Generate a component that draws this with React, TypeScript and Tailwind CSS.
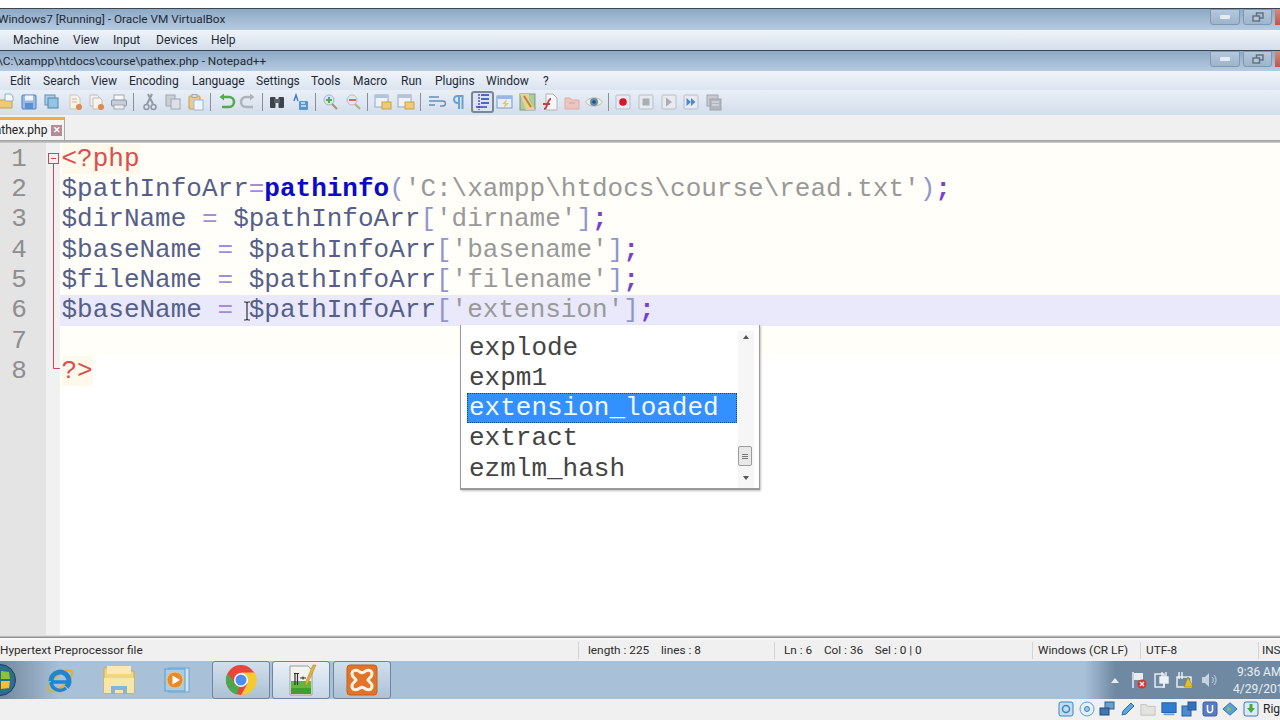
import type { ReactNode } from 'react';

const ui = "font-['Roboto','Noto_Sans',sans-serif]";

function Tool({ className = 'w-[22px]', children }: { className?: string; children: ReactNode }) {
  return (
    <div className={`flex h-[22px] shrink-0 items-center justify-center opacity-90 ${className}`}>
      <svg width="20" height="20" viewBox="0 0 20 20" fill="none">
        {children}
      </svg>
    </div>
  );
}

function Sep({ className }: { className: string }) {
  return <div className={`h-[18px] w-px shrink-0 bg-[#8a9098] ${className}`} />;
}

function WinButtons() {
  return (
    <div className="ml-auto flex h-[16px] gap-[3px] self-start pt-0">
      <div className="flex h-[16px] w-[30px] items-center justify-center rounded-b-[3px] border border-[#7f97b0] bg-gradient-to-b from-[#b4c8dc] to-[#9db4cc]">
        <div className="h-[4px] w-[10px] rounded-[1px] bg-[#e6ebf0]" />
      </div>
      <div className="flex h-[16px] w-[29px] items-center justify-center rounded-b-[3px] border border-[#7f97b0] bg-gradient-to-b from-[#b4c8dc] to-[#9db4cc]">
        <svg width="12" height="10" viewBox="0 0 12 10" fill="none" stroke="#5f6e7e" strokeWidth="1.4">
          <rect x="4.5" y="1" width="6.5" height="5" />
          <rect x="1" y="4" width="6.5" height="5" fill="#b4c6d9" />
        </svg>
      </div>
      <div className="h-[16px] w-[5px] bg-gradient-to-b from-[#d9897c] to-[#b9584c]" />
    </div>
  );
}

function TitleBar({ text, h }: { text: string; h: string }) {
  return (
    <div className={`flex shrink-0 overflow-hidden border-t border-[#3a4654] bg-gradient-to-b from-[#8ea9c5] to-[#b6cbe0] ${h}`}>
      <span className="ml-[-2px] mt-[1px] text-[11.8px] leading-[18px] text-[#1e2a36]">{text}</span>
      <WinButtons />
    </div>
  );
}

const vbMenu = [
  ['Machine', 'w-[60px]'],
  ['View', 'w-[40px]'],
  ['Input', 'w-[43px]'],
  ['Devices', 'w-[55px]'],
  ['Help', 'w-[40px]'],
];

const nppMenu = [
  ['Edit', 'w-[33px]'],
  ['Search', 'w-[48px]'],
  ['View', 'w-[38px]'],
  ['Encoding', 'w-[63px]'],
  ['Language', 'w-[64px]'],
  ['Settings', 'w-[55px]'],
  ['Tools', 'w-[42px]'],
  ['Macro', 'w-[48px]'],
  ['Run', 'w-[34px]'],
  ['Plugins', 'w-[51px]'],
  ['Window', 'w-[57px]'],
  ['?', 'w-[20px]'],
];

function Toolbar() {
  return (
    <div className="flex h-[25px] shrink-0 items-center bg-gradient-to-b from-[#e9eff7] to-[#d3deec] pb-[1px] pl-0">
      <Tool className="ml-[-5px] w-[22px]">
        <path d="M1 8h7l2-2h6v10H1z" fill="#f2c766" stroke="#c79a3a" />
        <path d="M9 2h6l2 3v4H9z" fill="#f7fafd" stroke="#8fa6c4" />
      </Tool>
      <Tool className="w-[23px]">
        <rect x="3" y="3" width="14" height="14" rx="1" fill="#8fb5e6" stroke="#3f74bc" />
        <rect x="6" y="3.5" width="8" height="5" fill="#f4f8fd" />
        <rect x="6" y="11" width="8" height="6" fill="#4f86cc" />
      </Tool>
      <Tool className="w-[23px]">
        <rect x="3" y="3" width="10" height="10" fill="#a9cbe6" stroke="#4e87b8" />
        <rect x="6" y="6" width="10" height="10" fill="#8fc0e0" stroke="#3e7ea8" />
      </Tool>
      <Tool className="w-[23px]">
        <path d="M5 3h7l3 3v11H5z" fill="#fbf3e6" stroke="#cfc4ae" />
        <path d="M7 7h5M7 10h5" stroke="#c9b79a" />
        <circle cx="14" cy="15" r="3" fill="#e0813c" />
      </Tool>
      <Tool>
        <path d="M3 3h7l2 2v9H3z" fill="#f3f3f3" stroke="#bcbcbc" />
        <path d="M6 6h7l2 2v9H6z" fill="#faf6ee" stroke="#c2b8a8" />
        <circle cx="14" cy="15" r="3" fill="#e0813c" />
      </Tool>
      <Tool>
        <rect x="5" y="3" width="10" height="6" fill="#fafafa" stroke="#9aa4b0" />
        <rect x="2.5" y="8" width="15" height="6" rx="1" fill="#c5ccd6" stroke="#818c9a" />
        <rect x="5" y="13" width="10" height="4" fill="#f2f2f2" stroke="#9aa4b0" />
      </Tool>
      <Sep className="ml-[3px] mr-[5px]" />
      <Tool>
        <path d="M12 2L7 12M8 2l5 10" stroke="#8a929c" strokeWidth="2" />
        <circle cx="6.5" cy="15" r="2.5" stroke="#8a929c" strokeWidth="1.5" />
        <circle cx="13.5" cy="15" r="2.5" stroke="#8a929c" strokeWidth="1.5" />
      </Tool>
      <Tool className="w-[23px]">
        <rect x="3" y="3" width="9" height="11" fill="#c8ccd2" stroke="#9aa0a8" />
        <rect x="8" y="7" width="9" height="10" fill="#dde1e6" stroke="#9aa0a8" />
      </Tool>
      <Tool className="w-[23px]">
        <rect x="3" y="4" width="11" height="13" rx="1" fill="#ecc98a" stroke="#c09545" />
        <rect x="6" y="2.5" width="5" height="3" fill="#d7dde4" stroke="#9aa0a8" />
        <rect x="8" y="8" width="9" height="10" fill="#f4f8fc" stroke="#9bb3d0" />
      </Tool>
      <Sep className="ml-[2.5px] mr-[4px]" />
      <Tool>
        <path d="M6 5h7a4.5 4.5 0 010 10H6" stroke="#45a33c" strokeWidth="2.5" />
        <path d="M8 1.5L3.5 5 8 8.500z" fill="#45a33c" />
      </Tool>
      <Tool className="w-[23px]">
        <path d="M14 5H8a4.500 4.500 0 000 10h7" stroke="#a8aeb5" strokeWidth="2.500" />
        <path d="M12 1.500L16.500 5 12 8.500z" fill="#a8aeb5" />
      </Tool>
      <Sep className="ml-[2.5px] mr-[2.5px]" />
      <Tool className="w-[23px]">
        <rect x="3" y="5" width="5.500" height="11" rx="1" fill="#2c3238" />
        <rect x="11.500" y="5" width="5.500" height="11" rx="1" fill="#2c3238" />
        <rect x="7" y="7" width="6" height="4" fill="#4c545c" />
      </Tool>
      <Tool className="w-[23px]">
        <rect x="3" y="2" width="6" height="7" fill="#e9f1fa" />
        <path d="M4 9l2-6 2 6" stroke="#2e6fc0" strokeWidth="1.500" />
        <rect x="9" y="9" width="9" height="9" rx="1" fill="#4d8dc9" />
        <path d="M11 11h4M11 14h5" stroke="#d6e8f7" strokeWidth="1.500" />
      </Tool>
      <Sep className="ml-[3.5px] mr-[2.5px]" />
      <Tool className="w-[23px]">
        <circle cx="9" cy="8" r="5" fill="#d6e6ee" stroke="#9ab3c2" />
        <path d="M12 12l5 5" stroke="#a08c60" strokeWidth="2" />
        <path d="M9 5v6M6 8h6" stroke="#46a245" strokeWidth="2" />
      </Tool>
      <Tool className="w-[23px]">
        <circle cx="9" cy="8" r="5" fill="#e2e8ee" stroke="#b0bcc6" />
        <path d="M12 12l5 5" stroke="#b8a47c" strokeWidth="2" />
        <path d="M6 8h7" stroke="#d85a5a" strokeWidth="2" />
      </Tool>
      <Sep className="ml-[2.5px] mr-[3.5px]" />
      <Tool className="w-[23px]">
        <rect x="2" y="3" width="13" height="12" fill="#f1f4f8" stroke="#8da2bb" />
        <rect x="2" y="3" width="13" height="3" fill="#aac1dc" />
        <rect x="9" y="10" width="9" height="7" fill="#f2c766" stroke="#c79a3a" />
      </Tool>
      <Tool className="w-[23px]">
        <rect x="2" y="3" width="13" height="12" fill="#f1f4f8" stroke="#8da2bb" />
        <rect x="2" y="3" width="13" height="3" fill="#aac1dc" />
        <rect x="9" y="10" width="9" height="7" fill="#f2c766" stroke="#c79a3a" />
      </Tool>
      <Sep className="ml-[2.5px] mr-[4px]" />
      <Tool>
        <path d="M3 5h10M3 9h14a2.500 2.500 0 010 5h-3M3 13h6" stroke="#5b84b5" strokeWidth="1.500" />
      </Tool>
      <Tool>
        <path d="M11 4v13M14.500 4v13M15.500 4H9.500a3.500 3.500 0 000 7h2" stroke="#5a9bd0" strokeWidth="2" />
      </Tool>
      <div className="ml-[1.5px] flex h-[22px] w-[23px] shrink-0 items-center justify-center rounded-[3px] border-2 border-[#7b8696] bg-[#dbe4f0]">
        <svg width="16" height="18" viewBox="0 0 16 18" fill="none" strokeWidth="1.500">
          <path d="M5 1v16" stroke="#5550b8" strokeDasharray="2 1" />
          <path d="M7 2h8M7 6h8M7 10h8" stroke="#1e3fb0" />
          <path d="M2 14h11" stroke="#3a44b0" />
        </svg>
      </div>
      <Tool>
        <rect x="2" y="4" width="15" height="12" fill="#e8f0f8" stroke="#6b94c4" />
        <rect x="2" y="4" width="15" height="3" fill="#8fb5de" />
        <path d="M12 7l-5 5h3l-2 5 6-6h-3z" fill="#eec04e" />
      </Tool>
      <Tool className="w-[23px]">
        <rect x="3" y="2" width="15" height="16" fill="#a7cc88" stroke="#7e8a90" />
        <path d="M3 2h9v6l6 10H9z" fill="#e8d090" />
        <path d="M7 4l7 11" stroke="#c56f2e" strokeWidth="2" />
      </Tool>
      <Tool>
        <path d="M6 2h7l4 4v12H6z" fill="#f8f8f8" stroke="#b0b0b0" />
        <path d="M4 17c4 0 3-10 7-10M3 12h7" stroke="#c92b2b" strokeWidth="1.800" />
      </Tool>
      <Tool>
        <path d="M3 6h5l1.500 2H17v9H3z" fill="#eec2bc" stroke="#dfa79f" />
        <path d="M7 11h6" stroke="#d29a92" />
      </Tool>
      <Tool className="w-[23px]">
        <path d="M1.500 10C5 4.500 15 4.500 18.500 10 15 15.500 5 15.500 1.500 10z" fill="#f4f0e0" stroke="#c8b88a" />
        <circle cx="10" cy="10" r="4" fill="#4f86b8" />
        <circle cx="10" cy="10" r="1.800" fill="#1c3b5c" />
      </Tool>
      <Sep className="ml-[2.5px] mr-[2.5px]" />
      <Tool className="w-[23px]">
        <rect x="3" y="3" width="14" height="14" rx="1" fill="#e9ebf0" stroke="#b4bbc6" />
        <circle cx="10" cy="10" r="3.800" fill="#d4001a" />
      </Tool>
      <Tool className="w-[23px]">
        <rect x="3" y="3" width="14" height="14" rx="1" fill="#e9ebf0" stroke="#b4bbc6" />
        <rect x="6.500" y="6.500" width="7" height="7" fill="#a4a8ae" />
      </Tool>
      <Tool>
        <rect x="3" y="3" width="14" height="14" rx="1" fill="#e9ebf0" stroke="#b4bbc6" />
        <path d="M7 5.500v9l6-4.500z" fill="#a4a8ae" />
      </Tool>
      <Tool className="w-[23px]">
        <rect x="3" y="3" width="14" height="14" rx="1" fill="#e9ebf0" stroke="#b4bbc6" />
        <path d="M5.500 6v8l4.500-4zM10 6v8l4.500-4z" fill="#3f7fd0" />
      </Tool>
      <Tool className="w-[23px]">
        <rect x="3" y="3" width="11" height="11" fill="#c4c8ce" stroke="#9a9fa6" />
        <rect x="6" y="7" width="11" height="11" fill="#aeb3ba" stroke="#999ea5" />
        <path d="M8 10h7M8 13h7" stroke="#e6e8ea" />
      </Tool>
    </div>
  );
}

const V = 'text-[#565f8a]';
const O = 'text-[#a68bdc]';
const B = 'text-[#9096cc]';
const S = 'text-[#999999]';
const E = 'font-bold text-[#7a3fd0]';

function CodeLine({ children, active, plain }: { children?: ReactNode; active?: boolean; plain?: boolean }) {
  return (
    <div className={`h-[30.33px] whitespace-pre pl-[1.500px] leading-[30.33px] ${active ? 'bg-[#e9e9fb]' : plain ? '' : 'bg-[#fffef8]'}`}>
      {children}
    </div>
  );
}

function ArrayAssign({ name, keyName, active }: { name: string; keyName: string; active?: boolean }) {
  return (
    <CodeLine active={active}>
      <span className={V}>{name}</span>
      <span className={O}> =</span>
      <span className={V}> $pathInfoArr</span>
      <span className={B}>[</span>
      <span className={S}>'{keyName}'</span>
      <span className={B}>]</span>
      <span className={E}>;</span>
    </CodeLine>
  );
}

function Popup() {
  const items = ['explode', 'expm1', 'extension_loaded', 'extract', 'ezmlm_hash'];
  return (
    <div className="absolute left-[460px] top-[182px] flex h-[165px] w-[300px] border-b-2 border-l border-r border-[#9a9a9a] bg-white pl-[6px] pt-[6px] shadow-[1px_1px_2px_rgba(0,0,0,0.25)]">
      <div className="w-[270px] pt-[1.5px]">
        {items.map((item, i) => (
          <div
            key={item}
            className={`h-[30.33px] whitespace-pre pl-[2px] leading-[30.33px] ${
              i === 2 ? 'bg-[#3390ff] text-[#f2f8ff] outline-1 -outline-offset-1 outline-dotted outline-[#16477f]' : 'text-[#444444]'
            }`}
          >
            {item}
          </div>
        ))}
      </div>
      <div className="relative ml-[1px] mr-[5px] flex-1 bg-[#f6f6f6]">
        <div className="absolute left-[5px] top-[4px] h-0 w-0 border-x-[3px] border-b-[4px] border-x-transparent border-b-[#555]" />
        <div className="absolute left-0 top-[115px] flex h-[20px] w-[14px] flex-col items-center justify-center gap-px rounded-[2px] border border-[#9c9c9c] bg-[#e8e8e8]">
          <div className="h-px w-[6px] bg-[#777]" />
          <div className="h-px w-[6px] bg-[#777]" />
          <div className="h-px w-[6px] bg-[#777]" />
        </div>
        <div className="absolute bottom-[8px] left-[5px] h-0 w-0 border-x-[3px] border-t-[4px] border-x-transparent border-t-[#555]" />
      </div>
    </div>
  );
}

function Editor() {
  return (
    <div className="relative flex min-h-0 flex-1 overflow-hidden bg-white font-['Liberation_Mono',monospace] text-[26px]">
      <div className="w-[46px] shrink-0 bg-[#e4e4e4] pr-[8px] pt-[0.6px] text-center text-[#8e8e8e]">
        {[1, 2, 3, 4, 5, 6, 7, 8].map((n) => (
          <div key={n} className="h-[30.33px] leading-[30.33px]">
            {n}
          </div>
        ))}
      </div>
      <div className="relative w-[14px] shrink-0 bg-[#f1f1f1]">
        <svg className="absolute left-0 top-0" width="14" height="240" viewBox="0 0 14 240" fill="none" stroke="#c8475a">
          <rect x="2.500" y="10.500" width="10" height="10" />
          <path d="M5 15.500h5M7.500 21v204.500H14" />
        </svg>
      </div>
      <div className="min-w-0 flex-1 pt-[0.6px]">
        <CodeLine>
          <span className="bg-[#fff9ec] text-[#d85050]">&lt;?php</span>
        </CodeLine>
        <CodeLine>
          <span className={V}>$pathInfoArr</span>
          <span className={O}>=</span>
          <span className="font-bold text-[#0a0ac8]">pathinfo</span>
          <span className={B}>(</span>
          <span className={S}>'C:\xampp\htdocs\course\read.txt'</span>
          <span className={B}>)</span>
          <span className={E}>;</span>
        </CodeLine>
        <ArrayAssign name="$dirName" keyName="dirname" />
        <ArrayAssign name="$baseName" keyName="basename" />
        <ArrayAssign name="$fileName" keyName="filename" />
        <ArrayAssign name="$baseName" keyName="extension" active />
        <CodeLine />
        <CodeLine plain>
          <span className="bg-[#fff9ec] text-[#d85050]">?&gt;</span>
        </CodeLine>
      </div>
      <svg className="absolute left-[242px] top-[158px]" width="10" height="20" viewBox="0 0 10 20" fill="none" stroke="#333" strokeWidth="1.200">
        <path d="M2 1h2l1 1 1-1h2M5 2v16M2 19h2l1-1 1 1h2" />
      </svg>
      <Popup />
    </div>
  );
}

function StatusBar() {
  return (
    <div className="flex h-[23px] shrink-0 items-center border-t-[2px] border-[#f8f8f8] bg-[#f0f0f0] text-[11.8px] text-[#2c2c2c]">
      <div className="w-[578px] shrink-0">Hypertext Preprocessor file</div>
      <div className="w-[196px] shrink-0 whitespace-pre border-l border-[#d4d4d4] pl-[9px]">length : 225    lines : 8</div>
      <div className="w-[258px] shrink-0 whitespace-pre border-l border-[#d4d4d4] pl-[9px]">Ln : 6    Col : 36    Sel : 0 | 0</div>
      <div className="w-[108px] shrink-0 border-l border-[#d4d4d4] pl-[5px]">Windows (CR LF)</div>
      <div className="w-[118px] shrink-0 border-l border-[#d4d4d4] pl-[5px]">UTF-8</div>
      <div className="shrink-0 border-l border-[#d4d4d4] pl-[3px]">INS</div>
    </div>
  );
}

function TaskButton({ className, children }: { className?: string; children: ReactNode }) {
  return (
    <div className={`flex h-[38px] w-[58px] shrink-0 items-center justify-center rounded-[3px] border border-[#71869c] bg-gradient-to-b from-[#d2dfec] to-[#acc1d6] ${className ?? ''}`}>
      {children}
    </div>
  );
}

function Taskbar() {
  return (
    <div className="flex h-[38px] shrink-0 items-center bg-[linear-gradient(90deg,#71889e_0,#a8c0d8_60px,#a8c0d8_1085px,#7089a2_1115px,#7089a2_100%)]">
      <svg className="ml-[-16px] shrink-0" width="32" height="34" viewBox="0 0 32 34">
        <circle cx="16" cy="17" r="15.500" fill="#2a6f8e" stroke="#1c3f58" />
        <path d="M7 9l8-1v8H6z" fill="#d8553a" />
        <path d="M17 8l8 1 1 7h-9z" fill="#8ebf3f" />
        <path d="M6 18h9v8l-8-1z" fill="#4c9ad6" />
        <path d="M17 18h9l-1 7-8 1z" fill="#f0c232" />
      </svg>
      <div className="ml-[27px] flex w-[34px] shrink-0 justify-center">
        <svg width="32" height="32" viewBox="0 0 32 32" fill="none">
          <ellipse cx="16" cy="17" rx="15" ry="6" transform="rotate(-40 16 17)" stroke="#e0b030" strokeWidth="2" />
          <path d="M7 17a9 9 0 0117-4 9 9 0 01-1.500 10" stroke="#1e86d0" strokeWidth="5" />
          <path d="M7 18h17M7 18a9 9 0 0015 6" stroke="#1e86d0" strokeWidth="3.500" />
        </svg>
      </div>
      <div className="ml-[25px] flex w-[34px] shrink-0 justify-center">
        <svg width="34" height="32" viewBox="0 0 34 32">
          <path d="M2 4h11l3 3h16v22H2z" fill="#f1d67e" stroke="#cdaa4e" />
          <rect x="5" y="2" width="24" height="8" fill="#f8eab8" />
          <path d="M2 14h30v15H2z" fill="#f7e6a6" />
          <path d="M9 22h16v8h-4v-4h-8v4H9z" fill="#7fb6de" />
        </svg>
      </div>
      <div className="ml-[27px] flex w-[28px] shrink-0 justify-center">
        <svg width="28" height="26" viewBox="0 0 28 26">
          <rect x="6" y="1" width="20" height="24" fill="#cfe4f4" stroke="#68a4d0" />
          <rect x="2" y="2" width="20" height="22" fill="#a8cde8" stroke="#5b9ccc" />
          <circle cx="12" cy="13" r="8" fill="#e98a26" stroke="#f4c27c" />
          <path d="M9.500 8.500v9l7.500-4.500z" fill="#fff" />
        </svg>
      </div>
      <TaskButton className="ml-[21px]">
        <svg width="32" height="32" viewBox="0 0 32 32">
          <circle cx="16" cy="16" r="15" fill="#e8453c" />
          <path d="M16 16L3 23.500A15 15 0 0012 30.500z" fill="#4aa84e" />
          <path d="M3 23.500A15 15 0 012.500 9.500L10 19z" fill="#4aa84e" />
          <path d="M16 8.500h13.500A15 15 0 0116 31l6.500-11.500z" fill="#f4c932" />
          <circle cx="16" cy="16" r="7" fill="#fff" />
          <circle cx="16" cy="16" r="5.500" fill="#4f8df0" />
        </svg>
      </TaskButton>
      <TaskButton className="ml-[2px] from-[#e9f0f7] to-[#c6d6e6]">
        <svg width="32" height="32" viewBox="0 0 32 32">
          <path d="M5 2h18l4 4v25H5z" fill="#f4f4ee" stroke="#9aa090" />
          <rect x="6" y="17" width="20" height="13" fill="#5fb83a" />
          <rect x="6" y="24" width="20" height="6" fill="#3f9e2c" />
          <path d="M10 10v11M12.500 10v11M9 9.500h5M15 14h6M18 12.500v3" stroke="#333" strokeWidth="1.200" fill="none" />
          <path d="M31 1l-8 18-3 4 .5-5L28 1z" fill="#e3b23c" stroke="#a67f20" strokeWidth=".5" />
        </svg>
      </TaskButton>
      <TaskButton className="ml-[3px]">
        <svg width="32" height="32" viewBox="0 0 32 32" fill="none">
          <rect x="1" y="1" width="30" height="30" rx="3" fill="#e2742a" stroke="#c75f1c" />
          <path d="M14 8c-4-3-8-2-8 2 0 3 3 4 4 6-1 2-4 3-4 6 0 4 4 5 8 2 1.500-1 2.500-1 4 0 4 3 8 2 8-2 0-3-3-4-4-6 1-2 4-3 4-6 0-4-4-5-8-2-1.500 1-2.500 1-4 0z" stroke="#fff3e6" strokeWidth="3" />
        </svg>
      </TaskButton>
      <div className="ml-auto flex h-full shrink-0 items-center">
        <div className="mr-[12px] h-0 w-0 border-x-[4px] border-b-[5px] border-x-transparent border-b-[#e8eef4]" />
        <svg width="16" height="18" viewBox="0 0 16 18" className="mr-[6px]">
          <path d="M2 1v16" stroke="#eee" strokeWidth="1.500" />
          <path d="M3 2h9v7H3z" fill="#e8ecf0" />
          <circle cx="11" cy="13" r="4.500" fill="#d8332c" />
          <path d="M9 11l4 4M13 11l-4 4" stroke="#fff" strokeWidth="1.200" />
        </svg>
        <svg width="18" height="18" viewBox="0 0 18 18" className="mr-[5px]" fill="none" stroke="#eef2f6" strokeWidth="1.400">
          <rect x="2" y="3" width="9" height="13" />
          <rect x="7" y="6" width="8" height="6" fill="#eef2f6" />
          <path d="M9 1v5M13 1v5M11 12v5" />
        </svg>
        <svg width="18" height="18" viewBox="0 0 18 18" className="mr-[7px]" fill="none" stroke="#eef2f6" strokeWidth="1.400">
          <rect x="1" y="6" width="14" height="10" />
          <path d="M3 1v7M6 1v7" />
          <path d="M12 6l5 10H8z" fill="#e8bf2a" stroke="#8a7a2a" strokeWidth=".6" />
        </svg>
        <svg width="16" height="16" viewBox="0 0 16 16" className="mr-[16px]" fill="#c6d2de">
          <path d="M1 5h3l4-4v14l-4-4H1z" />
          <path d="M11 5a4 4 0 010 6M13 3a7 7 0 010 10" stroke="#c6d2de" fill="none" />
        </svg>
        <div className="w-[47px] overflow-hidden whitespace-nowrap text-[12px] leading-[18px] text-[#e8eef4]">
          <div className="pl-[4px]">9:36 AM</div>
          <div className="mt-[-1px]">4/29/2019</div>
        </div>
      </div>
    </div>
  );
}

function VmStatus() {
  return (
    <div className="flex h-[21px] shrink-0 items-center justify-end gap-[4.500px] bg-[#f0f0f0] pb-[1px]">
      <svg width="16" height="16" viewBox="0 0 16 16"><rect x="1" y="1" width="14" height="14" rx="2" fill="#c4dcf0" stroke="#3a86c4" /><circle cx="8" cy="8" r="3.500" fill="none" stroke="#3a86c4" strokeWidth="1.500" /></svg>
      <svg width="16" height="16" viewBox="0 0 16 16"><circle cx="8" cy="8" r="7" fill="#e4f0fa" stroke="#5a9ed4" /><circle cx="8" cy="8" r="2.500" fill="#9cc8ea" stroke="#3a86c4" /></svg>
      <svg width="16" height="16" viewBox="0 0 16 16"><rect x="6" y="1" width="9" height="7" fill="#6aa0d0" stroke="#2c5e90" /><rect x="1" y="7" width="9" height="7" fill="#3f78b2" stroke="#1e4a7a" /></svg>
      <svg width="16" height="16" viewBox="0 0 16 16"><path d="M2 14l1-4 8-8 3 3-8 8z" fill="#5ea6e2" stroke="#2c6cae" /></svg>
      <svg width="16" height="16" viewBox="0 0 18 16"><path d="M1 3h6l1 2h9v10H1z" fill="#e2e2e0" stroke="#c0c0bc" /></svg>
      <svg width="16" height="16" viewBox="0 0 18 16"><rect x="1" y="1" width="16" height="11" fill="#2f7cd0" stroke="#1f5a9c" /><rect x="3" y="13" width="12" height="2" fill="#6aa0d0" /></svg>
      <svg width="16" height="16" viewBox="0 0 16 16"><rect x="1" y="5" width="9" height="10" fill="#4d8ad0" stroke="#2a5f9c" /><rect x="7" y="1" width="8" height="8" fill="#3470b8" stroke="#1f5a9c" /></svg>
      <svg width="16" height="16" viewBox="0 0 16 16"><rect x="1" y="1" width="14" height="14" rx="2" fill="#5a7cc8" stroke="#3a5aa6" /><path d="M5.500 4v5a2.500 2.500 0 005 0V4" fill="none" stroke="#fff" strokeWidth="1.500" /></svg>
      <svg width="16" height="16" viewBox="0 0 18 16"><path d="M9 1l8 7-8 7-8-7z" fill="#5aa0d8" stroke="#2e6fa8" /><path d="M6 5l5 3-5 3z" fill="#86c34e" /></svg>
      <svg width="16" height="16" viewBox="0 0 16 16"><rect x="1" y="1" width="14" height="14" rx="2" fill="#dceaf7" stroke="#3e78b8" /><path d="M8 12L4 7h2.500V3h3v4H12z" fill="#4aa63c" /></svg>
      <span className="w-[17px] overflow-hidden text-[12px] text-[#222]">Right</span>
    </div>
  );
}

export default function App() {
  return (
    <div className={`flex h-[720px] w-[1280px] flex-col overflow-hidden bg-white ${ui}`}>
      <div className="h-[8px] shrink-0 bg-white" />
      <TitleBar text="Windows7 [Running] - Oracle VM VirtualBox" h="h-[22px]" />
      <div className="flex h-[20px] shrink-0 items-center bg-gradient-to-b from-[#f0f4f9] to-[#d4dfec] pl-[13px] text-[12px] text-[#1f2a36]">
        {vbMenu.map(([label, w]) => (
          <span key={label} className={`shrink-0 ${w}`}>{label}</span>
        ))}
      </div>
      <TitleBar text="\C:\xampp\htdocs\course\pathex.php - Notepad++" h="h-[21px]" />
      <div className="flex h-[19px] shrink-0 items-center bg-gradient-to-b from-[#f0f4f9] to-[#dbe4f0] pl-[10px] text-[12px] text-[#1f2a36]">
        {nppMenu.map(([label, w]) => (
          <span key={label} className={`shrink-0 ${w}`}>{label}</span>
        ))}
      </div>
      <Toolbar />
      <div className="flex h-[25px] shrink-0 items-end bg-[#f0f0f0]">
        <div className="flex h-[23px] w-[65px] items-center gap-[4px] overflow-hidden border-r border-[#a8a8a8] border-t-[3px] border-t-[#f5a742] bg-[#f4f4f4] pr-[3px]">
          <span className="ml-[-12px] shrink-0 text-[12px] text-[#222]">pathex.php</span>
          <span className="flex h-[11px] w-[11px] shrink-0 items-center justify-center bg-[#b58c96] text-[9px] font-bold leading-none text-white">✕</span>
        </div>
      </div>
      <div className="h-[3px] shrink-0 bg-gradient-to-b from-[#9a9a9a] to-[#d0d0d0]" />
      <Editor />
      <div className="h-[3px] shrink-0 bg-gradient-to-b from-[#f4f4f4] to-[#808080]" />
      <StatusBar />
      <Taskbar />
      <VmStatus />
    </div>
  );
}
